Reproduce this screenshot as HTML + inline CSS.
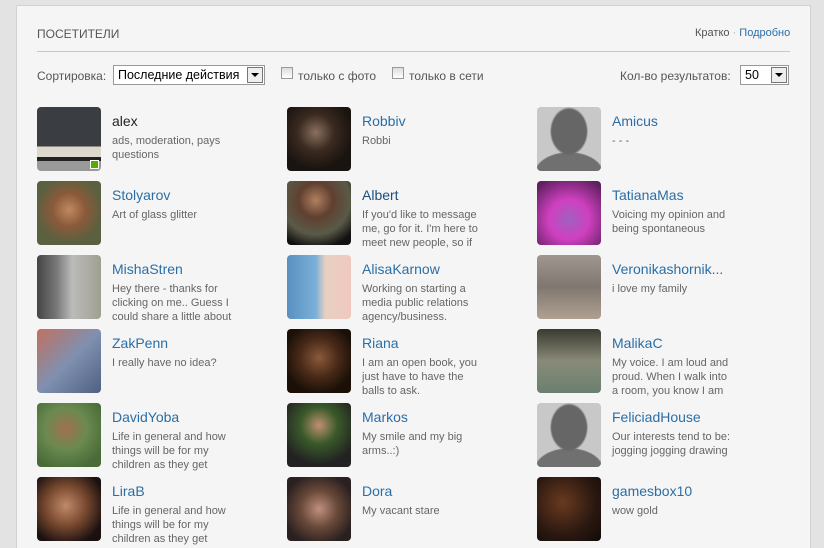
<!DOCTYPE html>
<html><head><meta charset="utf-8"><style>
*{margin:0;padding:0;box-sizing:border-box}
html,body{width:824px;height:548px;overflow:hidden}
body{background:#e3e3e3;font-family:"Liberation Sans",Arial,sans-serif;position:relative}
.panel{position:absolute;left:16px;top:5px;width:795px;height:560px;background:#f5f5f5;border:1px solid #d2d2d2}
.t{position:absolute;font-size:12px;color:#555;white-space:nowrap}
.hr{position:absolute;left:37px;top:51px;width:753px;height:1px;background:#c8c8c8}
.sel{position:absolute;height:20px;border:1px solid #999;background:#fff;font-size:12.5px;color:#000;padding:2px 0 0 4px;white-space:nowrap;overflow:hidden}
.arr{position:absolute;right:1px;top:1px;width:16px;height:16px;border:1px solid #777;background:#eee}
.arr:after{content:"";position:absolute;left:3px;top:5px;border:4px solid transparent;border-top:4px solid #000;border-bottom:0}
.cb{position:absolute;width:12px;height:12px;border:1px solid #999;background:linear-gradient(#ddd,#fff)}
.u{position:absolute;width:240px}
.av{position:absolute;left:0;top:0;width:64px;height:64px;border-radius:4px;overflow:hidden}
.n{position:absolute;left:75px;top:6px;font-size:14px;color:#2b6ea6;white-space:nowrap}
.d{position:absolute;left:75px;top:27px;font-size:11px;line-height:14px;color:#666;width:125px}
.on{position:absolute;left:53px;top:53px;width:9px;height:9px;background:#5a0;border:1px solid #fff}
</style></head><body>
<div class="panel"></div>
<div class="t" style="left:37px;top:27px;font-size:12px;color:#555">ПОСЕТИТЕЛИ</div>
<div class="t" style="left:695px;top:27px;font-size:11px">Кратко <span style="color:#aaa">·</span> <span style="color:#2b6ea6">Подробно</span></div>
<div class="hr"></div>
<div class="t" style="left:37px;top:69px">Сортировка:</div>
<div class="sel" style="left:113px;top:65px;width:152px">Последние действия<div class="arr"></div></div>
<div class="cb" style="left:281px;top:67px"></div>
<div class="t" style="left:298px;top:69px">только с фото</div>
<div class="cb" style="left:392px;top:67px"></div>
<div class="t" style="left:409px;top:69px">только в сети</div>
<div class="t" style="left:620px;top:69px">Кол-во результатов:</div>
<div class="sel" style="left:740px;top:65px;width:49px">50<div class="arr"></div></div>

<div class="u" style="left:37px;top:107px"><div class="av" style="background:linear-gradient(#3a3d42 0 62%,#ddd8cc 62% 78%,#222 78% 84%,#999 84%)"></div><div class="on"></div><div class="n" style="color:#222">alex</div><div class="d">ads, moderation, pays questions</div></div>
<div class="u" style="left:287px;top:107px"><div class="av" style="background:radial-gradient(circle at 45% 40%,#8a7060 0,#3a2a20 35%,#1a1410 70%)"></div><div class="n">Robbiv</div><div class="d">Robbi</div></div>
<div class="u" style="left:537px;top:107px"><div class="av" style="background:radial-gradient(ellipse 30% 38% at 50% 38%,#666 0 90%,transparent 100%),radial-gradient(ellipse 55% 35% at 50% 105%,#707070 0 95%,transparent 100%),#c8c8c8"></div><div class="n">Amicus</div><div class="d">- - -</div></div>

<div class="u" style="left:37px;top:181px"><div class="av" style="background:radial-gradient(circle at 50% 45%,#c08860 0,#8a5a3a 35%,#5a6040 70%)"></div><div class="n">Stolyarov</div><div class="d">Art of glass glitter</div></div>
<div class="u" style="left:287px;top:181px"><div class="av" style="background:radial-gradient(circle at 45% 30%,#b08060 0,#604030 30%,#5a5a48 60%,#111 85%)"></div><div class="n" style="color:#1d4f7e">Albert</div><div class="d">If you'd like to message me, go for it. I'm here to meet new people, so if</div></div>
<div class="u" style="left:537px;top:181px"><div class="av" style="background:radial-gradient(circle at 50% 60%,#a060c0 0,#d040c0 40%,#602060 90%)"></div><div class="n">TatianaMas</div><div class="d">Voicing my opinion and being spontaneous</div></div>

<div class="u" style="left:37px;top:255px"><div class="av" style="background:linear-gradient(90deg,#444 0,#777 30%,#bbb 55%,#a0a090 100%)"></div><div class="n">MishaStren</div><div class="d">Hey there - thanks for clicking on me.. Guess I could share a little about</div></div>
<div class="u" style="left:287px;top:255px"><div class="av" style="background:linear-gradient(90deg,#5a90c0 0,#7ab0d8 45%,#e8d0c0 60%,#f0c8c0 100%)"></div><div class="n">AlisaKarnow</div><div class="d">Working on starting a media public relations agency/business.</div></div>
<div class="u" style="left:537px;top:255px"><div class="av" style="background:linear-gradient(#a09890,#807870 50%,#b0a090)"></div><div class="n">Veronikashornik...</div><div class="d">i love my family</div></div>

<div class="u" style="left:37px;top:329px"><div class="av" style="background:linear-gradient(135deg,#c07060,#8090b0 50%,#506080)"></div><div class="n">ZakPenn</div><div class="d">I really have no idea?</div></div>
<div class="u" style="left:287px;top:329px"><div class="av" style="background:radial-gradient(circle at 50% 45%,#8a5a3a 0,#4a2a18 40%,#1a1008 75%)"></div><div class="n">Riana</div><div class="d">I am an open book, you just have to have the balls to ask.</div></div>
<div class="u" style="left:537px;top:329px"><div class="av" style="background:linear-gradient(#3a3a30,#8a8a78 50%,#6a8070)"></div><div class="n">MalikaC</div><div class="d" style="width:122px">My voice. I am loud and proud. When I walk into a room, you know I am</div></div>

<div class="u" style="left:37px;top:403px"><div class="av" style="background:radial-gradient(circle at 45% 40%,#a07050 0,#6a8a50 40%,#4a6a38 80%)"></div><div class="n">DavidYoba</div><div class="d">Life in general and how things will be for my children as they get</div></div>
<div class="u" style="left:287px;top:403px"><div class="av" style="background:radial-gradient(circle at 50% 35%,#c09070 0,#3a5a2a 35%,#222 75%)"></div><div class="n">Markos</div><div class="d">My smile and my big arms..:)</div></div>
<div class="u" style="left:537px;top:403px"><div class="av" style="background:radial-gradient(ellipse 30% 38% at 50% 38%,#666 0 90%,transparent 100%),radial-gradient(ellipse 55% 35% at 50% 105%,#707070 0 95%,transparent 100%),#c8c8c8"></div><div class="n">FeliciadHouse</div><div class="d">Our interests tend to be: jogging jogging drawing</div></div>

<div class="u" style="left:37px;top:477px"><div class="av" style="background:radial-gradient(circle at 45% 45%,#c08a6a 0,#7a4a30 40%,#1a1010 80%)"></div><div class="n">LiraB</div><div class="d">Life in general and how things will be for my children as they get</div></div>
<div class="u" style="left:287px;top:477px"><div class="av" style="background:radial-gradient(circle at 50% 50%,#c09080 0,#6a4a3a 40%,#2a2020 80%)"></div><div class="n">Dora</div><div class="d">My vacant stare</div></div>
<div class="u" style="left:537px;top:477px"><div class="av" style="background:radial-gradient(circle at 40% 40%,#6a3a20 0,#2a1810 60%,#100a08 100%)"></div><div class="n">gamesbox10</div><div class="d">wow gold</div></div>
</body></html>
